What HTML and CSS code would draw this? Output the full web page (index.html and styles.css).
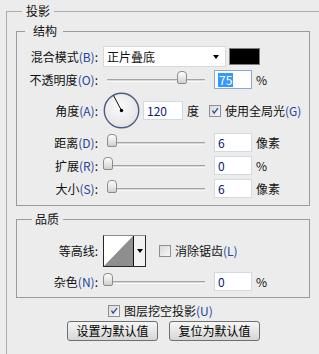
FILE: index.html
```html
<!DOCTYPE html>
<html lang="zh-CN">
<head>
  <meta charset="UTF-8" />
  <title>投影</title>
  <link rel="stylesheet" href="styles.css">
</head>
<body>
  <fieldset class="outer">
    <legend>投影</legend>

    <fieldset class="box">
      <legend class="lg-struct">结构</legend>

      <div class="row row-blend">
        <span class="lbl">混合模式<span class="key">(B)</span>:</span>
        <div class="combo"><span>正片叠底</span><i class="caret"></i></div>
        <div class="swatch"></div>
      </div>

      <div class="row row-s">
        <span class="lbl">不透明度<span class="key">(O)</span>:</span>
        <div class="slider"><div class="track"></div><div class="thumb" style="left:74px"></div></div>
        <div class="field focus"><span class="sel">75</span></div>
        <span class="unit">%</span>
      </div>

      <div class="row row-angle">
        <span class="lbl">角度<span class="key">(A)</span>:</span>
        <svg class="dial" width="37" height="37" viewBox="0 0 37 37">
          <defs>
            <radialGradient id="dg" cx="45%" cy="40%" r="60%">
              <stop offset="0" stop-color="#fbfbfb"/>
              <stop offset="1" stop-color="#e4e4e4"/>
            </radialGradient>
          </defs>
          <circle cx="18.5" cy="18.5" r="17.2" fill="url(#dg)" stroke="#4d5c84" stroke-width="1.4"/>
          <line x1="18.5" y1="18.5" x2="10.5" y2="3.5" stroke="#111" stroke-width="1"/>
          <circle cx="18.5" cy="18.5" r="1.7" fill="#000"/>
        </svg>
        <div class="field wide">120</div>
        <span class="unit deg">度</span>
        <span class="check on">
          <svg width="12" height="12" viewBox="0 0 12 12"><path d="M3 5.5 L5 8.5 L9.5 2.5" fill="none" stroke="#2b4aa0" stroke-width="1.6"/></svg>
        </span>
        <span class="check-lbl">使用全局光<span class="key">(G)</span></span>
      </div>

      <div class="row row-s">
        <span class="lbl">距离<span class="key">(D)</span>:</span>
        <div class="slider"><div class="track"></div><div class="thumb" style="left:4px"></div></div>
        <div class="field">6</div>
        <span class="unit">像素</span>
      </div>

      <div class="row row-s">
        <span class="lbl">扩展<span class="key">(R)</span>:</span>
        <div class="slider"><div class="track"></div><div class="thumb" style="left:0px"></div></div>
        <div class="field">0</div>
        <span class="unit">%</span>
      </div>

      <div class="row row-s">
        <span class="lbl">大小<span class="key">(S)</span>:</span>
        <div class="slider"><div class="track"></div><div class="thumb" style="left:4px"></div></div>
        <div class="field">6</div>
        <span class="unit">像素</span>
      </div>
    </fieldset>

    <fieldset class="box box-q">
      <legend class="lg-quality">品质</legend>

      <div class="row row-contour">
        <span class="lbl">等高线:</span>
        <div class="contour">
          <svg width="29" height="30" viewBox="0 0 29 30">
            <rect x="0" y="0" width="29" height="30" fill="#fff"/>
            <polygon points="0,30 29,0 29,30" fill="#8e8e8e"/>
          </svg>
          <div class="drop"><i class="caret"></i></div>
        </div>
        <span class="check"></span>
        <span class="check-lbl">消除锯齿<span class="key">(L)</span></span>
      </div>

      <div class="row row-s">
        <span class="lbl">杂色<span class="key">(N)</span>:</span>
        <div class="slider"><div class="track"></div><div class="thumb" style="left:0px"></div></div>
        <div class="field">0</div>
        <span class="unit">%</span>
      </div>
    </fieldset>

    <div class="knockout">
      <span class="check on">
        <svg width="12" height="12" viewBox="0 0 12 12"><path d="M3 5.5 L5 8.5 L9.5 2.5" fill="none" stroke="#2b4aa0" stroke-width="1.6"/></svg>
      </span>
      <span class="check-lbl">图层挖空投影<span class="key">(U)</span></span>
    </div>

    <div class="buttons">
      <button>设置为默认值</button>
      <button>复位为默认值</button>
    </div>
  </fieldset>
</body>
</html>
```

FILE: styles.css
```css
* {
  box-sizing: border-box;
}
body {
  margin: 0;
  width: 319px;
  height: 354px;
  overflow: hidden;
  background: #ececec;
  font-family: "Noto Sans CJK SC", "Microsoft YaHei", sans-serif;
  font-size: 12px;
  line-height: 14px;
  color: #111;
}
fieldset {
  margin: 0;
  padding: 0;
  min-width: 0;
}
legend {
  line-height: 14px;
}
/* outer group runs off the right and bottom edges of the panel */
.outer {
  margin: 4px 0 0 6px;
  width: 313px;
  height: 350px;
  padding: 0 0 0 9px;
  border: 1px solid #ababab;
  border-right: none;
  border-bottom: none;
}
.outer > legend {
  margin-left: 6px;
  padding: 0 4px;
}
.box {
  width: 294px;
  margin-top: 6px;
  padding: 0 0 7px 0;
  border: 1px solid #9a9a9a;
}
.box-q {
  padding-bottom: 6px;
}
.lg-struct {
  margin-left: 8px;
  padding: 0 6px 0 8px;
}
.lg-quality {
  margin-left: 15px;
  padding: 0 4px 0 3px;
}
.key {
  color: #23449a;
}

.row {
  display: flex;
  align-items: center;
  margin-top: 4px;
}
.row-blend {
  margin-top: 8px;
  height: 21px;
}
.row-blend + .row {
  margin-top: 3px;
}
.row-s {
  height: 19px;
}
.row-angle {
  height: 37px;
  margin-top: 3px !important;
}
.row-contour {
  height: 32px;
  margin-top: 9px;
}
.row-contour + .row {
  margin-top: 5px;
}
.lbl {
  width: 81px;
  text-align: right;
  margin-right: 5px;
  white-space: nowrap;
}

.combo {
  width: 123px;
  height: 21px;
  background: #fff;
  border: 1px solid #d5d8dd;
  display: flex;
  align-items: center;
  padding-left: 3px;
}
.caret {
  display: block;
  width: 0;
  height: 0;
  border-left: 3px solid transparent;
  border-right: 3px solid transparent;
  border-top: 4px solid #000;
}
.combo .caret {
  margin-left: auto;
  margin-right: 6px;
}
.swatch {
  width: 31px;
  height: 17px;
  margin-left: 3px;
  background: #000;
  border: 1px solid #7d7d7d;
}

.slider {
  width: 104px;
  height: 19px;
  position: relative;
}
.track {
  position: absolute;
  left: 4px;
  right: 2px;
  top: 9px;
  height: 3px;
  background: #d8d8d8;
  border-top: 1px solid #a4a4a4;
  border-bottom: 1px solid #f8f8f8;
}
.thumb {
  position: absolute;
  top: 1px;
  width: 10px;
  height: 13px;
  border: 1px solid #8c8c8c;
  border-radius: 4px 4px 2px 2px;
  background: linear-gradient(#fdfdfd, #e4e4e4 60%, #cfcfcf);
}

.field {
  width: 38px;
  height: 19px;
  margin-left: 7px;
  background: #fff;
  border: 1px solid #d3d9e2;
  padding-left: 3px;
  color: #0d1a6a;
  line-height: 17px;
}
.field.focus {
  border-color: #86a9d6;
}
.sel {
  background: #3399ff;
  color: #fff;
  padding: 0 1px;
  display: inline-block;
  line-height: 14px;
}
.field.wide {
  width: 40px;
  margin-left: 3px;
}
.unit {
  margin-left: 4px;
}
.dial {
  display: block;
}

.check {
  width: 12px;
  height: 12px;
  border: 1px solid #8f8f8f;
  background: linear-gradient(135deg, #d9d9d9, #f7f7f7);
  display: inline-flex;
  align-items: center;
  justify-content: center;
}
.check svg {
  display: block;
}
.row-angle .check {
  margin-left: 10px;
}
.check-lbl {
  margin-left: 4px;
  white-space: nowrap;
}

.contour {
  display: flex;
  height: 32px;
  border: 1px solid #262626;
  border-top-color: #8a8a8a;
}
.contour svg {
  display: block;
}
.drop {
  width: 12px;
  border-left: 1px solid #111;
  background: #f2f2f2;
  display: flex;
  align-items: center;
  justify-content: center;
}
.row-contour .check {
  margin-left: 13px;
}

.knockout {
  display: flex;
  align-items: center;
  height: 14px;
  margin-top: 6px;
  margin-left: 92px;
}
.buttons {
  display: flex;
  gap: 11px;
  margin-top: 3px;
  margin-left: 51px;
}
button {
  width: 91px;
  height: 20px;
  padding: 0;
  font-family: inherit;
  font-size: 12px;
  line-height: 14px;
  color: #000;
  border: 1px solid #6f6f6f;
  border-radius: 3px;
  background: linear-gradient(#f6f6f6, #e6e6e6 50%, #d6d6d6);
}
```
